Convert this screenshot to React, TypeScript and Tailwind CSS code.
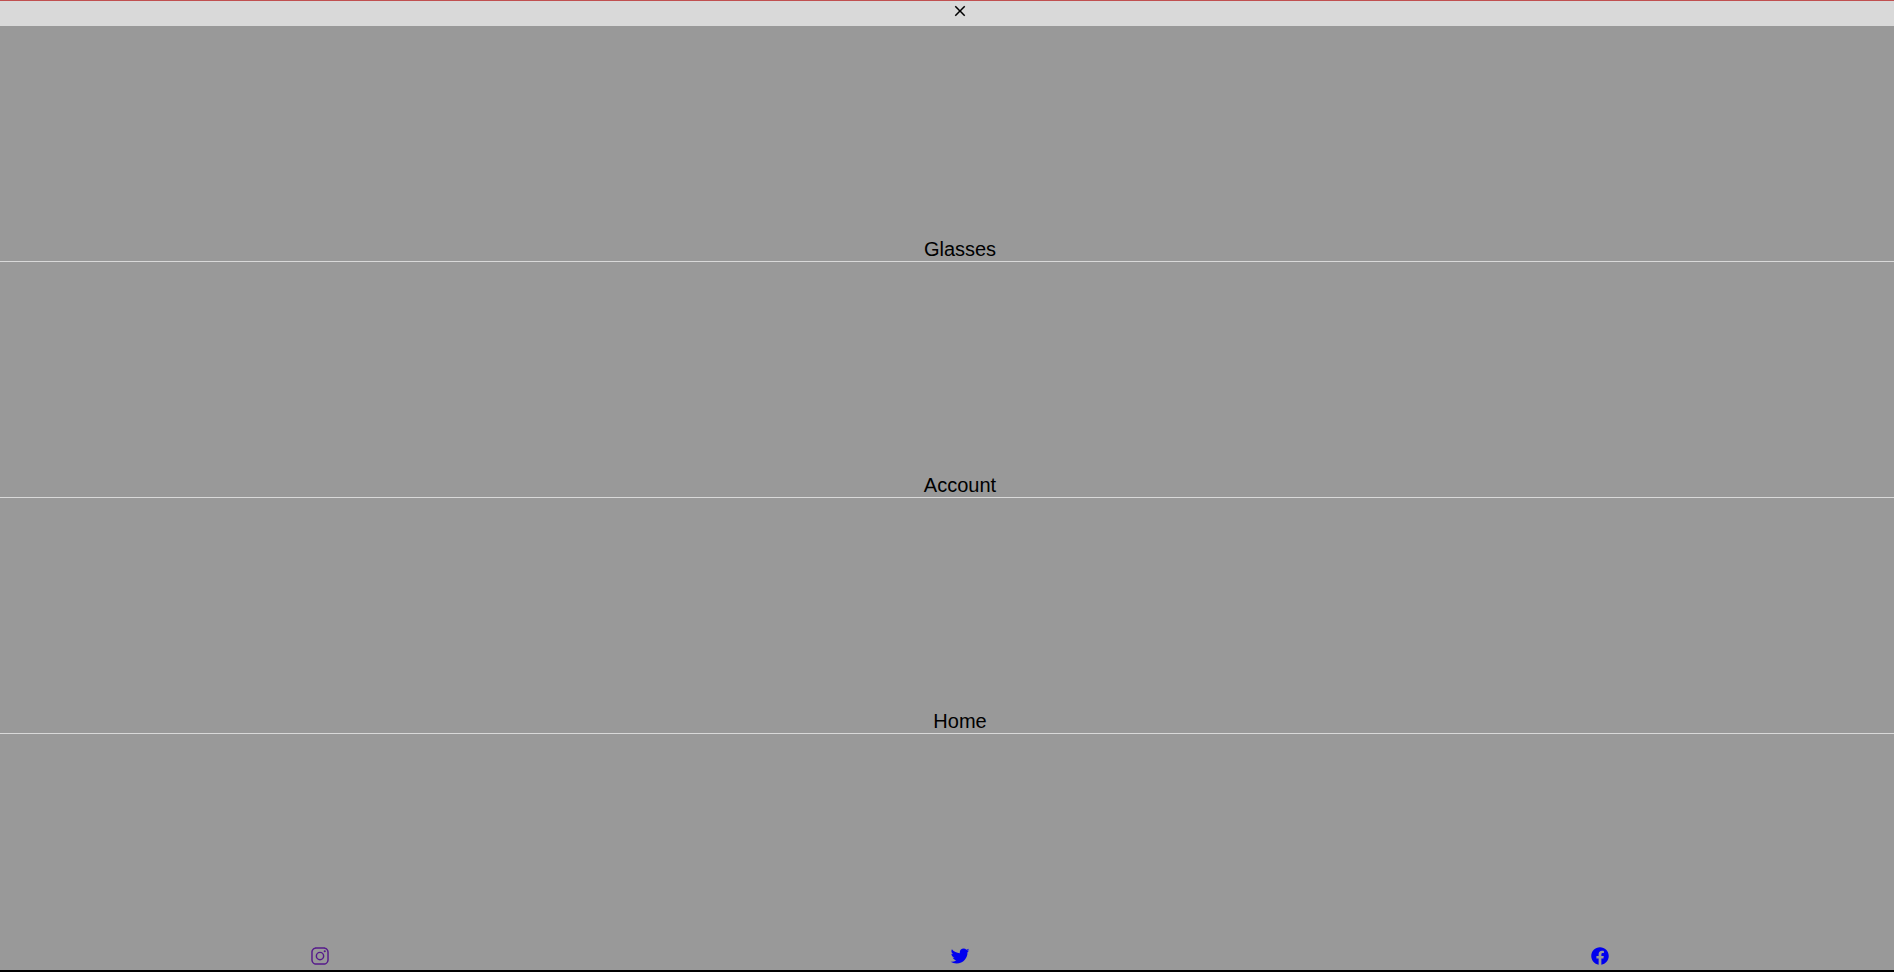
import { IoLogoFacebook, IoLogoInstagram, IoLogoTwitter } from "react-icons/io5";
import { MdClose } from "react-icons/md";

const links = ["Glasses", "Account", "Home"];

const socials = [
  { name: "Instagram", Icon: IoLogoInstagram, color: "text-[#551a8b]" },
  { name: "Twitter", Icon: IoLogoTwitter, color: "text-[#0000ee]" },
  { name: "Facebook", Icon: IoLogoFacebook, color: "text-[#0000ee]" },
];

export default function App() {
  return (
    <div className="h-screen overflow-hidden border-t border-b-2 border-t-[#c05050] border-b-black bg-[#999999] font-['Liberation_Sans',Arial,sans-serif] text-xl text-black">
      <div className="flex h-full w-[calc(100%+26px)] flex-col">
        <button
          type="button"
          aria-label="Close menu"
          className="flex h-[25px] shrink-0 justify-center bg-[#d9d9d9] pt-px"
        >
          <MdClose size={18} />
        </button>
        <nav className="grid flex-1 grid-rows-4">
          {links.map((label) => (
            <a
              key={label}
              href="#"
              className="flex items-end justify-center border-b border-[#d9d9d9] leading-6"
            >
              {label}
            </a>
          ))}
          <div className="grid grid-cols-3 items-end pb-1">
            {socials.map(({ name, Icon, color }) => (
              <a key={name} href="#" aria-label={name} className={`flex justify-center ${color}`}>
                <Icon size={20} />
              </a>
            ))}
          </div>
        </nav>
      </div>
    </div>
  );
}
